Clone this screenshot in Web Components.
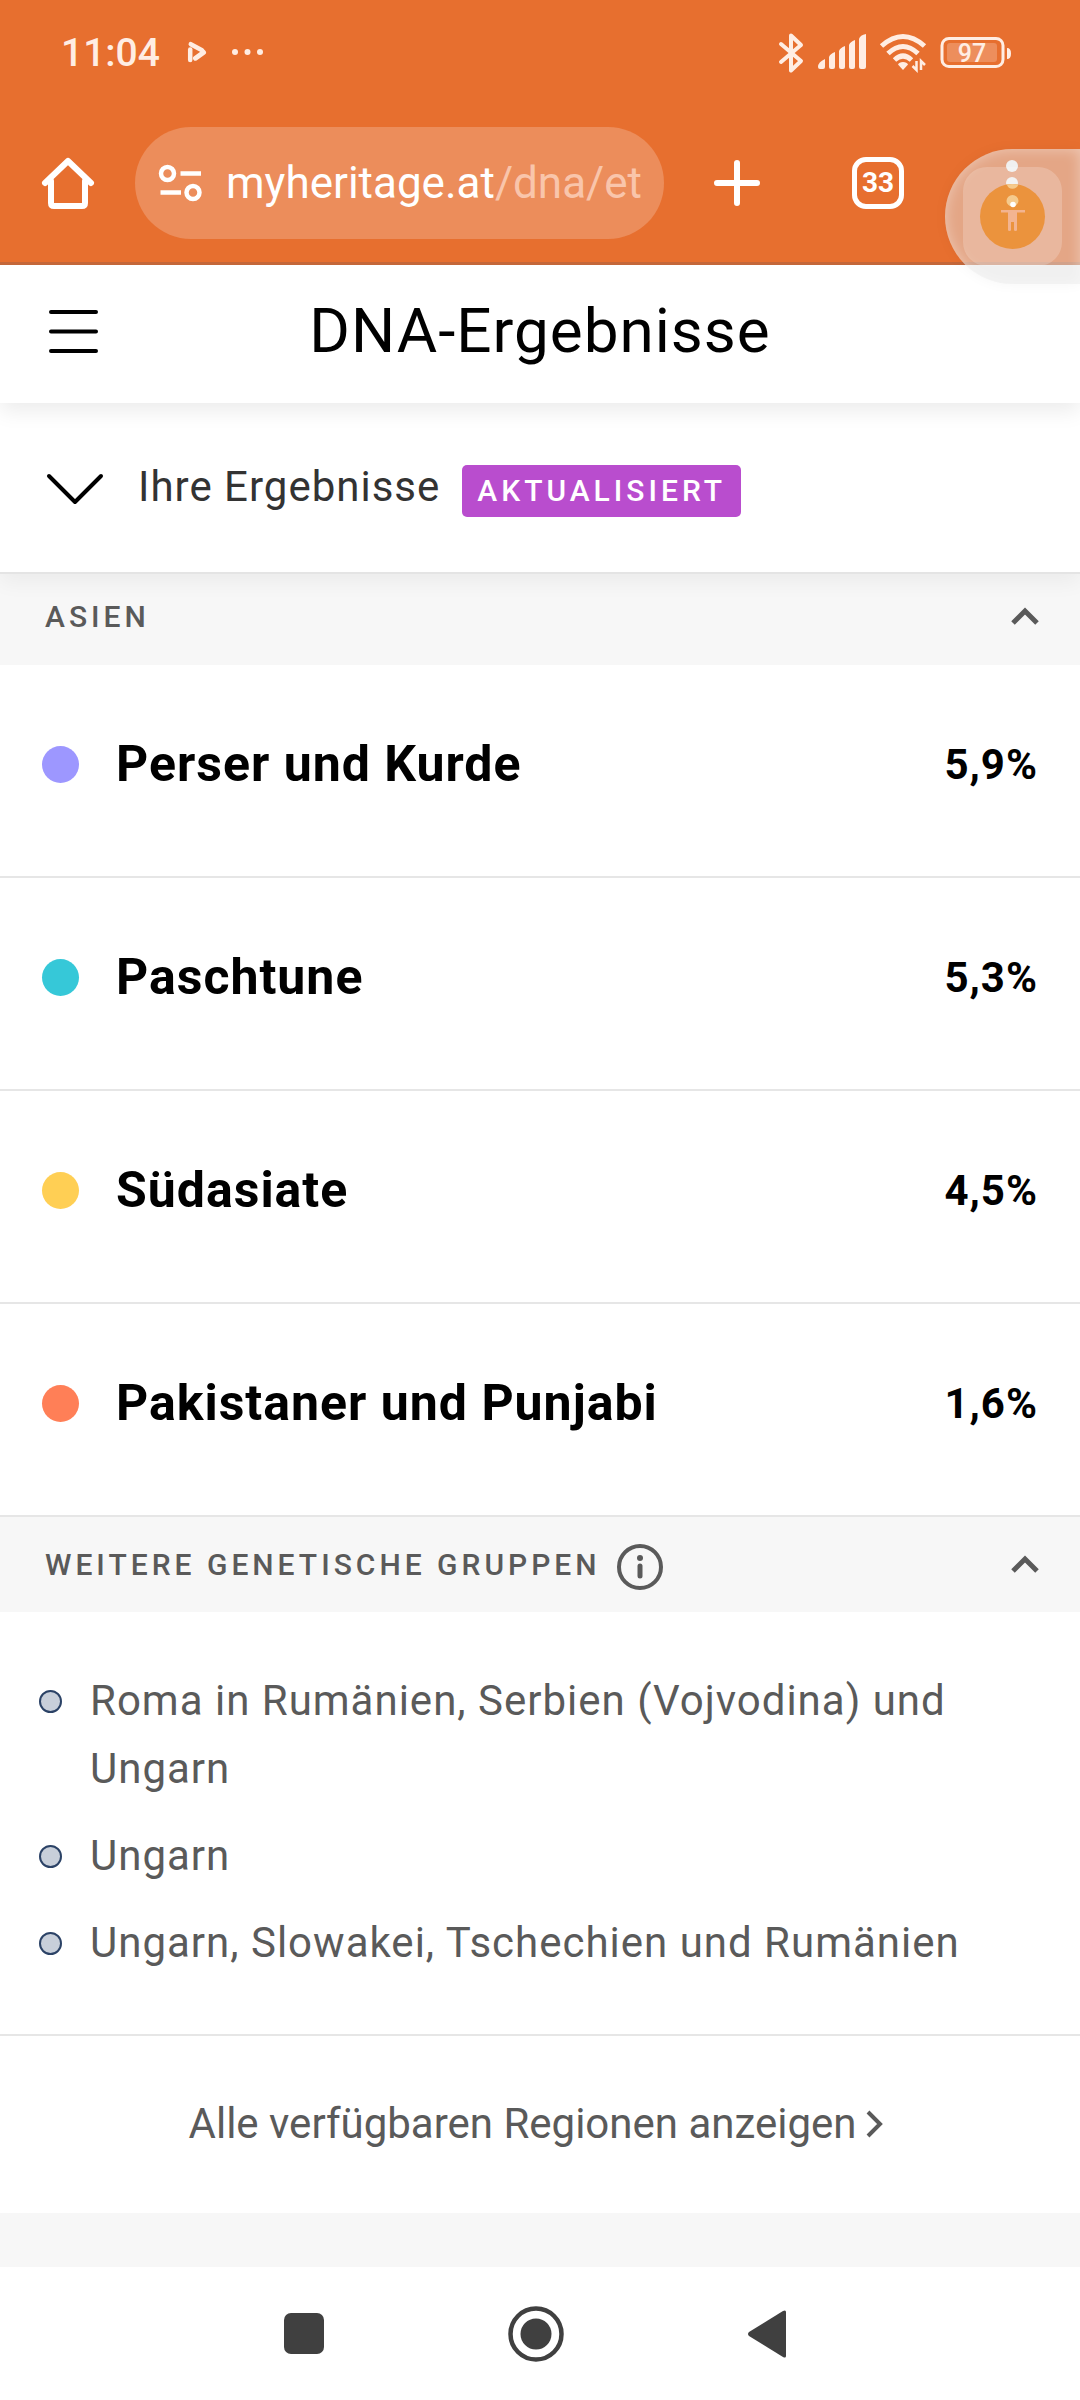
<!DOCTYPE html>
<html lang="de">
<head>
<meta charset="utf-8">
<meta name="viewport" content="width=device-width, initial-scale=1">
<title>DNA-Ergebnisse</title>
<style>
  html { background: #fff; }
  body { margin: 0; font-family: Roboto, "Liberation Sans", sans-serif; color: #000; }
</style>
</head>
<body>
<dna-app></dna-app>
<script>
const base = `
  * { box-sizing: border-box; }
  svg { display: block; flex: none; overflow: visible; }
  button { font: inherit; color: inherit; letter-spacing: inherit; background: none; border: 0; padding: 0; margin: 0; display: flex; align-items: center; flex: none; }
  h1, h2, h3, p, ul { margin: 0; padding: 0; font: inherit; }
`;
const define = (name, css, html) => customElements.define(name, class extends HTMLElement {
  constructor() {
    super();
    this.attachShadow({ mode: "open" }).innerHTML = `<style>${base}${css}</style>${html(this)}`;
  }
});

/* Phone status line */
define("status-bar", `
  :host { display: flex; align-items: center; justify-content: space-between; height: 108px; padding: 0 68px 2px 61px; color: #ffede3; }
  .side { display: flex; align-items: center; }
  .left { gap: 28px; }
  .right { gap: 14px; }
  time { font-size: 39px; line-height: 44px; font-weight: 500; }
  text { font: 500 25px Roboto, sans-serif; }
`, () => `
  <div class="side left">
    <time>11:04</time>
    <svg width="75" height="24" viewBox="0 0 75 24" fill="none" stroke="currentColor">
      <path d="M2.200 8.500v10.500" stroke-width="4.500" stroke-linecap="round"/>
      <path d="M2.800 3.200L14 9.300" stroke-width="4.500" stroke-linecap="round"/>
      <path d="M7.500 17.200L15.500 11.500" stroke-width="5" stroke-linecap="round"/>
      <g fill="currentColor" stroke="none"><circle cx="47" cy="11" r="3"/><circle cx="59.500" cy="11" r="3"/><circle cx="72" cy="11" r="3"/></g>
    </svg>
  </div>
  <div class="side right">
    <svg width="25" height="40" viewBox="0 0 25 40" fill="none" stroke="currentColor" stroke-width="4" stroke-linecap="round" stroke-linejoin="round"><path d="M2 11l20 17-10 9.500V2.500L22 12 2 29"/></svg>
    <svg width="48" height="40" viewBox="0 0 48 40" fill="currentColor"><path d="M0 34q0-5 7-8v8q0 2-2 2H2q-2 0-2-2zM11 24q1-3 6-5v15q0 2-2 2h-2q-2 0-2-2zM21 18q1-3 6-5v21q0 2-2 2h-2q-2 0-2-2zM31 12q1-3 6-5v27q0 2-2 2h-2q-2 0-2-2zM41 6q1-4 7-5v33q0 2-2 2h-3q-2 0-2-2z"/></svg>
    <svg width="46" height="40" viewBox="0 0 46 40" fill="none" stroke="currentColor" stroke-width="5"><path d="M1.500 13q21.500-19 43 0M8 20.500q15-14 30 0M14.500 27q8.500-8 17 0"/><path d="M23 29q4 0 5 2.500L23 37l-5-5.500q1-2.500 5-2.500z" fill="currentColor" stroke="none"/><path d="M36.500 28v9l-4-4M41 37v-9l4 4" stroke-width="2.500"/></svg>
    <svg width="72" height="40" viewBox="0 0 72 40"><rect x="2" y="5.500" width="61" height="28" rx="7" fill="none" stroke="currentColor" stroke-width="3"/><rect x="7" y="10" width="50" height="19" rx="3" fill="currentColor" opacity=".25"/><path d="M67 15q4 0 4 5.500t-4 5.500z" fill="currentColor"/><text x="32" y="29" text-anchor="middle" fill="currentColor">97</text></svg>
  </div>
`);

/* Browser toolbar */
define("browser-bar", `
  :host { display: flex; align-items: center; height: 157px; padding: 0 60px 5px 42px; color: #fff; border-bottom: 3px solid #c4673a; position: relative; }
  .url { flex: 1; display: flex; align-items: center; gap: 24px; height: 112px; margin: 0 50px 0 41px; padding: 0 20px 0 24px; border-radius: 56px; background: #ec8d5b; min-width: 0; }
  .address { flex: 1; min-width: 0; white-space: nowrap; font-size: 44px; line-height: 60px; }
  .path { color: #f9c5ab; }
  .tabs { margin: 0 100px 0 92px; width: 52px; height: 52px; border: 5px solid #fff; border-radius: 14px; justify-content: center; font-size: 28px; line-height: 32px; font-weight: 700; }
  .assist { position: absolute; right: 0; top: 41px; width: 135px; height: 135px; border-radius: 68px 0 0 68px; background: rgba(225,225,225,.49); box-shadow: 0 0 14px rgba(0,0,0,.04), inset 0 0 14px rgba(255,255,255,.4); padding: 18px; }
  .pad { width: 99px; height: 99px; border-radius: 24px; background: rgba(255,255,255,.2); display: flex; align-items: center; justify-content: center; }
`, () => `
  <button aria-label="Startseite"><svg width="52" height="52" viewBox="0 0 52 52" fill="none" stroke="currentColor" stroke-width="6" stroke-linejoin="round" stroke-linecap="round"><path d="M3 26L26 4l23 22"/><path d="M9 24v22q0 3 3 3h28q3 0 3-3V24" /></svg></button>
  <div class="url">
    <svg width="43" height="38" viewBox="0 0 43 38" fill="none" stroke="currentColor" stroke-width="4.500"><circle cx="8.500" cy="9.500" r="6.500"/><path d="M21.500 9.500H42M1.500 28.500H22"/><circle cx="34" cy="28.500" r="6.500"/></svg>
    <div class="address">myheritage.at<span class="path">/dna/et</span></div>
  </div>
  <button aria-label="Neuer Tab"><svg width="46" height="46" viewBox="0 0 46 46" stroke="currentColor" stroke-width="6" stroke-linecap="round"><path d="M23 3v40M3 23h40"/></svg></button>
  <button class="tabs" aria-label="33 offene Tabs">33</button>
  <button aria-label="Menü"><svg width="16" height="46" viewBox="0 0 16 46" fill="#fff"><circle cx="8" cy="6" r="6"/><circle cx="8" cy="23" r="6"/><circle cx="8" cy="40" r="6"/></svg></button>
  <button class="assist" aria-label="Bedienungshilfe"><span class="pad">
    <svg width="65" height="65" viewBox="0 0 65 65"><circle cx="32.500" cy="32.500" r="32.500" fill="#eb933d"/><path d="M26.800 0.500a6 6 0 0 0 11.500 0q-6-1-11.500 0zM26.500 17a6 6 0 1 1 12 0q0 3-3.500 5h-5q-3.500-2-3.500-5z" fill="#f5ca8d"/><circle cx="33" cy="20.500" r="2.800" fill="#fff"/><path d="M21 26h24v2.500h-8V46q0 1-1.500 1T34 46v-8h-3v8q0 1-1.500 1T28 46V28.500h-7z" fill="#f3b490"/></svg>
  </span></button>
`);

/* Page title */
define("page-header", `
  :host { display: grid; grid-template-columns: 98px 1fr 98px; align-items: center; height: 138px; padding-bottom: 6px; background: #fff; box-shadow: 0 8px 20px rgba(0,0,0,.08); position: relative; z-index: 1; }
  button { padding-left: 49px; }
  h1 { text-align: center; font-size: 62px; line-height: 72px; letter-spacing: 1px; }
`, () => `
  <button aria-label="Navigation"><svg width="49" height="46" viewBox="0 0 49 46" stroke="#000" stroke-width="4" stroke-linecap="round"><path d="M2 4h45M2 23.500h45M2 43h45"/></svg></button>
  <h1><slot></slot></h1>
`);

/* Collapsible results line */
define("results-toggle", `
  :host { display: block; background: #fff; border-bottom: 2px solid #e4e4e4; box-shadow: 0 8px 20px rgba(0,0,0,.05); position: relative; }
  button { width: 100%; height: 169px; padding: 0 47px 2px; }
  h2 { margin-left: 35px; font-size: 42px; line-height: 50px; letter-spacing: 1px; color: #333; }
  .badge { margin: 8px 0 0 22px; padding: 0 15px; height: 52px; border-radius: 5px; background: #b94dce; color: #fff; font-size: 30px; line-height: 52px; font-weight: 500; letter-spacing: 4px; }
`, () => `
  <button aria-expanded="true">
    <svg width="56" height="30" viewBox="0 0 56 30" fill="none" stroke="#000" stroke-width="4" stroke-linecap="round" stroke-linejoin="round"><path d="M2 4l26 26L54 4"/></svg>
    <h2><slot></slot></h2>
    <span class="badge"><slot name="badge"></slot></span>
  </button>
`);

/* Grey group heading, with an optional info button */
define("group-heading", `
  :host { display: flex; align-items: center; justify-content: space-between; height: 95px; padding: 0 41px 0 45px; background: #f7f7f7; color: #5a5a5a; }
  :host([compact]) { height: 91px; padding-bottom: 6px; }
  .label { display: flex; align-items: center; gap: 16px; }
  .label button { padding-top: 5px; }
  h2 { font-size: 30px; line-height: 36px; font-weight: 500; letter-spacing: 4px; }
`, el => `
  <div class="label"><h2><slot></slot></h2>${el.hasAttribute("info") ? `<button aria-label="Info"><svg width="46" height="46" viewBox="0 0 46 46"><circle cx="23" cy="23" r="21" fill="none" stroke="currentColor" stroke-width="4"/><circle cx="23" cy="14" r="3" fill="currentColor"/><path d="M23 22v10" stroke="currentColor" stroke-width="5" stroke-linecap="round"/></svg></button>` : ""}</div>
  <button aria-label="Einklappen"><svg width="28" height="20" viewBox="0 0 28 20" fill="none" stroke="currentColor" stroke-width="5"><path d="M2 16L14 4l12 12"/></svg></button>
`);

/* One ethnicity with its share */
define("ethnicity-row", `
  :host { display: flex; align-items: center; height: 213px; padding: 0 42px 12px 42px; border-bottom: 2px solid #e6e6e6; background: #fff; }
  .dot { width: 37px; height: 37px; border-radius: 50%; background: var(--dot); flex: none; }
  h3 { flex: 1; margin-left: 37px; padding-bottom: 2px; font-size: 50px; line-height: 60px; font-weight: 700; letter-spacing: 1px; }
  .share { font-size: 42px; line-height: 50px; font-weight: 700; letter-spacing: 1px; }
`, () => `<span class="dot"></span><h3><slot></slot></h3><span class="share"><slot name="share"></slot></span>`);

define("group-item", `
  :host { display: flex; align-items: flex-start; gap: 28px; font-size: 42px; line-height: 68px; letter-spacing: 1px; color: #5a5a5a; }
  .mark { flex: none; width: 23px; height: 23px; margin-top: 23px; border-radius: 50%; border: 2px solid #2b4266; background: #c8cfda; }
`, () => `<span class="mark"></span><span><slot></slot></span>`);

define("group-list", `
  :host { display: flex; flex-direction: column; gap: 19px; padding: 55px 90px 57px 39px; border-bottom: 2px solid #e6e6e6; background: #fff; }
`, () => `<slot></slot>`);

define("more-link", `
  :host { display: flex; align-items: center; justify-content: center; height: 177px; padding-bottom: 2px; background: #fff; }
  a { display: flex; align-items: center; gap: 9px; padding-right: 7px; color: #5a5a5a; text-decoration: none; font-size: 42px; line-height: 50px; }
`, () => `<a href="#"><slot></slot><svg width="19" height="28" viewBox="0 0 19 28" fill="none" stroke="currentColor" stroke-width="4"><path d="M3 2l12 12L3 26"/></svg></a>`);

/* System navigation */
define("system-nav", `
  :host { display: flex; align-items: center; justify-content: center; height: 133px; background: #fff; padding-right: 11px; }
  div { display: flex; align-items: center; justify-content: space-between; width: 502px; }
`, () => `<div>
  <button aria-label="Letzte Apps"><svg width="40" height="41" viewBox="0 0 40 41"><rect width="40" height="41" rx="7" fill="#404040"/></svg></button>
  <button aria-label="Home"><svg width="56" height="56" viewBox="0 0 56 56"><circle cx="28" cy="28" r="25.500" fill="none" stroke="#404040" stroke-width="4.500"/><circle cx="28" cy="28" r="15.500" fill="#404040"/></svg></button>
  <button aria-label="Zurück"><svg width="38" height="48" viewBox="0 0 38 48"><path d="M1 22L35 1q3-1.500 3 1v44q0 2.500-3 1L1 26q-2-2 0-4z" fill="#404040"/></svg></button>
</div>`);

define("dna-app", `
  :host { display: block; }
  .top { background: #e76f2f; position: relative; z-index: 2; }
  .foot { height: 54px; background: #f7f7f7; }
`, () => `
  <header class="top"><status-bar></status-bar><browser-bar></browser-bar></header>
  <main>
    <page-header>DNA-Ergebnisse</page-header>
    <results-toggle>Ihre Ergebnisse<span slot="badge">AKTUALISIERT</span></results-toggle>
    <group-heading compact>ASIEN</group-heading>
    <ethnicity-row style="--dot:#9d97ff">Perser und Kurde<span slot="share">5,9%</span></ethnicity-row>
    <ethnicity-row style="--dot:#36c8d8">Paschtune<span slot="share">5,3%</span></ethnicity-row>
    <ethnicity-row style="--dot:#ffcf54">Südasiate<span slot="share">4,5%</span></ethnicity-row>
    <ethnicity-row style="--dot:#ff7f57">Pakistaner und Punjabi<span slot="share">1,6%</span></ethnicity-row>
    <group-heading info>WEITERE GENETISCHE GRUPPEN</group-heading>
    <group-list>
      <group-item>Roma in Rumänien, Serbien (Vojvodina) und Ungarn</group-item>
      <group-item>Ungarn</group-item>
      <group-item>Ungarn, Slowakei, Tschechien und Rumänien</group-item>
    </group-list>
    <more-link>Alle verfügbaren Regionen anzeigen</more-link>
    <div class="foot"></div>
  </main>
  <system-nav></system-nav>
`);
</script>
</body>
</html>
